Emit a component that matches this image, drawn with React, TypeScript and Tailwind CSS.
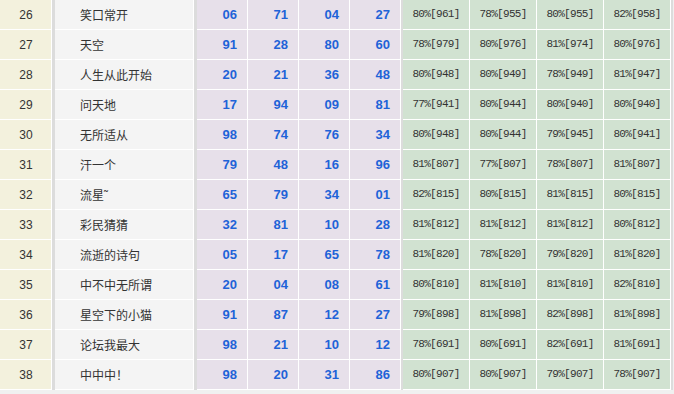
const rows: [number, string, string[], string[]][] = [
  [26, '笑口常开', ['06', '71', '04', '27'], ['80%[961]', '78%[955]', '80%[955]', '82%[958]']],
  [27, '天空', ['91', '28', '80', '60'], ['78%[979]', '80%[976]', '81%[974]', '80%[976]']],
  [28, '人生从此开始', ['20', '21', '36', '48'], ['80%[948]', '80%[949]', '78%[949]', '81%[947]']],
  [29, '问天地', ['17', '94', '09', '81'], ['77%[941]', '80%[944]', '80%[940]', '80%[940]']],
  [30, '无所适从', ['98', '74', '76', '34'], ['80%[948]', '80%[944]', '79%[945]', '80%[941]']],
  [31, '汗一个', ['79', '48', '16', '96'], ['81%[807]', '77%[807]', '78%[807]', '81%[807]']],
  [32, '流星˜', ['65', '79', '34', '01'], ['82%[815]', '80%[815]', '81%[815]', '80%[815]']],
  [33, '彩民猜猜', ['32', '81', '10', '28'], ['81%[812]', '81%[812]', '81%[812]', '80%[812]']],
  [34, '流逝的诗句', ['05', '17', '65', '78'], ['81%[820]', '78%[820]', '79%[820]', '81%[820]']],
  [35, '中不中无所谓', ['20', '04', '08', '61'], ['80%[810]', '81%[810]', '81%[810]', '82%[810]']],
  [36, '星空下的小猫', ['91', '87', '12', '27'], ['79%[898]', '81%[898]', '82%[898]', '81%[898]']],
  [37, '论坛我最大', ['98', '21', '10', '12'], ['78%[691]', '80%[691]', '82%[691]', '81%[691]']],
  [38, '中中中！', ['98', '20', '31', '86'], ['80%[907]', '80%[907]', '79%[907]', '78%[907]']],
];

const Sep = () => <div className="w-[3px] shrink-0 bg-[#dcdcdc]" />;

export default function App() {
  return (
    <div className="w-[674px] h-[394px] overflow-hidden bg-[#f0f0f0]">
      <div className="flex flex-col">
        {rows.map(([no, name, nums, rates]) => (
          <div key={no} className="flex h-[30px]">
            <div
              className="w-[52px] shrink-0 flex items-center justify-center bg-[#f3f1dd] border-r border-b border-white text-[12px] text-[#333] pl-[1px]"
              style={{ fontFamily: '"Liberation Sans", sans-serif' }}
            >
              {no}
            </div>
            <Sep />
            <div
              className="w-[139px] shrink-0 flex items-center bg-[#f4f4f4] border-r border-b border-white pl-[25px] text-[12px] text-[#333]"
              style={{ fontFamily: '"Noto Sans CJK SC", sans-serif' }}
            >
              {name}
            </div>
            <Sep />
            <div className="flex">
              {nums.map((n, i) => (
                <div
                  key={i}
                  className="w-[51px] shrink-0 flex items-center justify-end pr-[10px] bg-[#e7e0ea] border-r border-b border-white text-[13px] font-bold text-[#1f63d8]"
                  style={{ fontFamily: '"Liberation Sans", sans-serif' }}
                >
                  {n}
                </div>
              ))}
            </div>
            <div className="w-[2px] shrink-0 bg-[#dcdcdc]" />
            <div className="flex">
              {rates.map((r, i) => (
                <div
                  key={i}
                  className="w-[67px] shrink-0 flex items-center justify-center bg-[#d1e2d1] border-r border-b border-white text-[11px] tracking-[-0.7px] text-[#333]"
                  style={{ fontFamily: '"Liberation Mono", monospace' }}
                >
                  {r}
                </div>
              ))}
            </div>
            <div className="w-[2px] shrink-0 bg-[#dcdcdc]" />
          </div>
        ))}
      </div>
    </div>
  );
}
